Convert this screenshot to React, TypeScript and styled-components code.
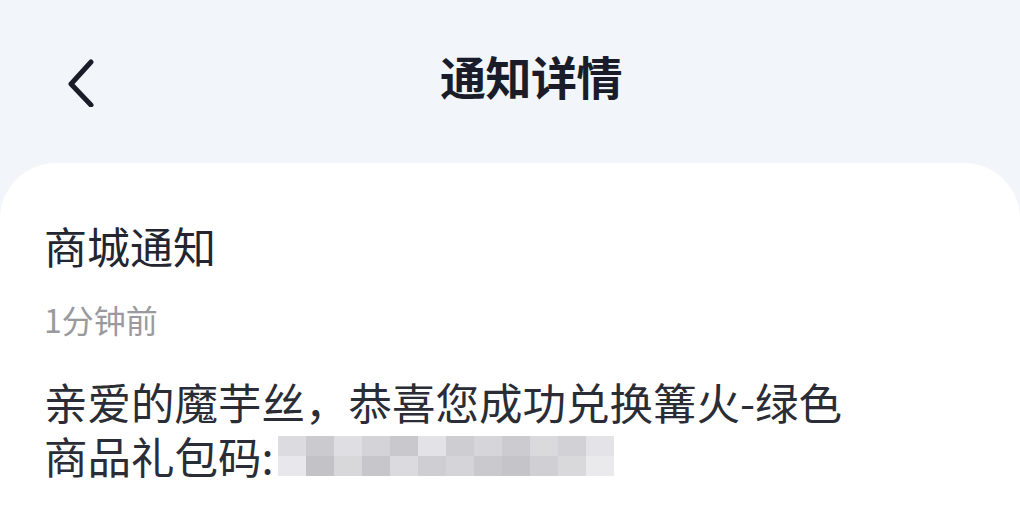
import React from 'react';
import styled, { createGlobalStyle } from 'styled-components';

const GlobalStyle = createGlobalStyle`
  html, body {
    margin: 0;
    padding: 0;
    background: #f2f5f9;
    font-family: "Noto Sans CJK SC", "Noto Sans", sans-serif;
  }
`;

const Page = styled.div`
  width: 1020px;
  height: 525px;
  overflow: hidden;
  display: flex;
  flex-direction: column;
  background: #f2f5f9;
`;

const Header = styled.div`
  height: 163px;
  display: grid;
  grid-template-columns: 120px 1fr 78px;
  align-items: center;
`;

const BackButton = styled.button`
  border: none;
  background: transparent;
  padding: 0 0 0 62px;
  display: flex;
  align-items: center;
  cursor: pointer;
`;

const Title = styled.h1`
  margin: 0 0 14px;
  text-align: center;
  font-size: 46px;
  font-weight: 700;
  color: #1b1c2a;
  letter-spacing: -0.5px;
`;

const Card = styled.div`
  flex: 1;
  background: #ffffff;
  border-radius: 56px 56px 0 0;
  padding: 52px 44px 0;
`;

const CardTitle = styled.div`
  font-size: 43px;
  line-height: 60px;
  color: #232530;
`;

const Time = styled.div`
  margin-top: 22px;
  font-size: 32px;
  line-height: 44px;
  color: #9a9a9e;
`;

const Body = styled.div`
  margin-top: 34px;
  font-size: 43.5px;
  line-height: 54px;
  color: #2b2d36;
`;

const Mosaic = styled.span`
  display: inline-grid;
  grid-template-columns: repeat(12, 28px);
  grid-template-rows: repeat(2, 20px);
  vertical-align: 18px;
  margin-left: 4px;
  opacity: 0.9;
`;

const Cell = styled.span<{ shade: string }>`
  background: ${p => p.shade};
`;

const shades = [
  '#d9d9dd', '#c5c5ca', '#dcdce0', '#cfcfd4', '#c3c3c8', '#e1e1e5', '#c9c9ce', '#d2d2d6', '#c7c7cc', '#d6d6da', '#cdcdd2', '#e2e2e6',
  '#e6e6ea', '#bdbdc2', '#d4d4d8', '#c1c1c6', '#d8d8dc', '#cacacf', '#d0d0d5', '#c4c4c9', '#bfbfc4', '#cbcbd0', '#d5d5d9', '#e8e8ec',
];

const ChevronLeft = () => (
  <svg width="36" height="50" viewBox="0 0 36 50" fill="none">
    <path d="M29 5 L9 27 L29 48" stroke="#1b1c2a" strokeWidth="5" strokeLinecap="round" strokeLinejoin="round" />
  </svg>
);

const App: React.FC = () => {
  return (
    <>
      <GlobalStyle />
      <Page>
        <Header>
          <BackButton>
            <ChevronLeft />
          </BackButton>
          <Title>通知详情</Title>
          <div />
        </Header>
        <Card>
          <CardTitle>商城通知</CardTitle>
          <Time>1分钟前</Time>
          <Body>
            亲爱的魔芋丝，恭喜您成功兑换篝火-绿色
            <br />
            商品礼包码:
            <Mosaic>
              {shades.map((s, i) => (
                <Cell key={i} shade={s} />
              ))}
            </Mosaic>
          </Body>
        </Card>
      </Page>
    </>
  );
};

export default App;
